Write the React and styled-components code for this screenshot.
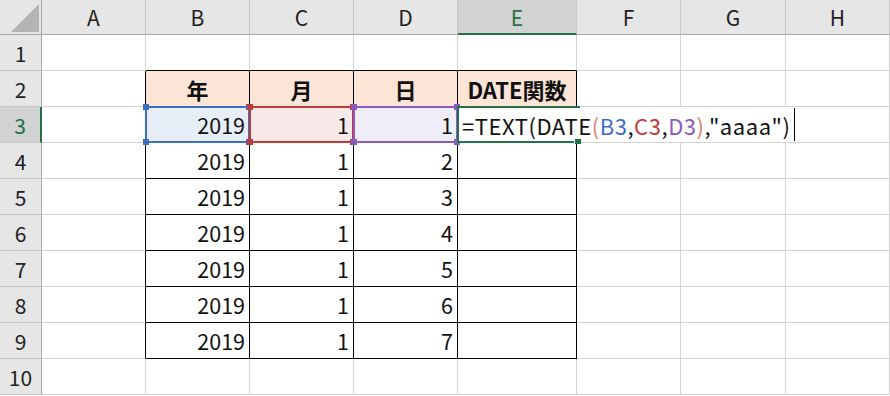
import React from "react";
import styled, { createGlobalStyle } from "styled-components";

const GlobalStyle = createGlobalStyle`
  html, body {
    margin: 0;
    padding: 0;
    background: #ffffff;
  }
  body {
    font-family: "Noto Sans CJK JP", "Noto Sans", sans-serif;
    overflow: hidden;
  }
`;

const COLS = ["A", "B", "C", "D", "E", "F", "G", "H"];
const COL_WIDTHS = [104, 104, 104, 104, 119, 104, 105, 104];
const ROWS = 10;

const GRID = "#d4d4d4";
const LINE = "#000000";

const Sheet = styled.div`
  display: grid;
  grid-template-columns: 42px ${COL_WIDTHS.map((w) => w + "px").join(" ")};
  grid-template-rows: 35px repeat(${ROWS}, 36px);
  width: 890px;
  height: 396px;
  background: #ffffff;
`;

const Corner = styled.div`
  display: flex;
  align-items: flex-end;
  justify-content: flex-end;
  padding: 0 2px 2px 0;
  background: #e6e6e6;
  border-right: 1px solid #a8a8a8;
  border-bottom: 1px solid #a8a8a8;
  box-sizing: border-box;
`;

const ColHeader = styled.div`
  display: flex;
  align-items: center;
  justify-content: center;
  box-sizing: border-box;
  background: ${(p) => (p.$selected ? "#d2d2d2" : "#e6e6e6")};
  color: ${(p) => (p.$selected ? "#217346" : "#222222")};
  border-right: 1px solid #c6c6c6;
  border-bottom: ${(p) => (p.$selected ? "2px solid #217346" : "1px solid #a8a8a8")};
  font-size: 21px;
  padding-top: ${(p) => (p.$selected ? "1px" : "0")};
`;

const RowHeader = styled.div`
  display: flex;
  align-items: center;
  justify-content: center;
  box-sizing: border-box;
  background: ${(p) => (p.$selected ? "#d2d2d2" : "#e6e6e6")};
  color: ${(p) => (p.$selected ? "#217346" : "#222222")};
  border-right: ${(p) => (p.$selected ? "2px solid #217346" : "1px solid #a8a8a8")};
  border-bottom: 1px solid #c6c6c6;
  font-size: 21px;
`;

const Cell = styled.div`
  position: relative;
  display: flex;
  align-items: center;
  justify-content: ${(p) => (p.$align === "right" ? "flex-end" : "center")};
  box-sizing: border-box;
  padding: 0 4px 0 4px;
  background: ${(p) => p.$fill || "transparent"};
  border-right: 1px solid ${(p) => p.$right || GRID};
  border-bottom: 1px solid ${(p) => p.$bottom || GRID};
  font-size: ${(p) => (p.$bold ? "22px" : "21.5px")};
  font-weight: ${(p) => (p.$bold ? 700 : 400)};
  color: #111111;
  white-space: nowrap;
`;

/* coloured frames that Excel draws over the cells a formula refers to */
const RefBox = styled.div`
  position: absolute;
  inset: -1px;
  border: 2px solid ${(p) => p.$color};
  z-index: ${(p) => p.$z};
  pointer-events: none;
`;

const Knob = styled.span`
  position: absolute;
  width: 6px;
  height: 6px;
  background: ${(p) => p.$color};
  left: ${(p) => (p.$x ? "auto" : "-4px")};
  right: ${(p) => (p.$x ? "-4px" : "auto")};
  top: ${(p) => (p.$y ? "auto" : "-4px")};
  bottom: ${(p) => (p.$y ? "-4px" : "auto")};
`;

/* in-cell editor, spills over the neighbouring cells */
const EditBox = styled.div`
  position: absolute;
  left: -1px;
  top: 0;
  bottom: 0;
  width: 341px;
  z-index: 5;
  display: flex;
  align-items: center;
  background: #ffffff;
  font-size: 22px;
  letter-spacing: 0.55px;
  color: #111111;
  padding-left: 5px;
  box-sizing: border-box;
`;

const ActiveFrame = styled.div`
  position: absolute;
  left: -1px;
  top: -1px;
  width: 121px;
  bottom: -1px;
  border-top: 2px solid #217346;
  border-bottom: 2px solid #217346;
  border-left: 2px solid #217346;
  z-index: 6;
  pointer-events: none;
`;

const FillHandle = styled.span`
  position: absolute;
  right: -1px;
  bottom: -3px;
  width: 6px;
  height: 5px;
  background: #217346;
  border-left: 1px solid #ffffff;
`;

const Caret = styled.span`
  display: inline-block;
  width: 1.5px;
  height: 33px;
  margin-left: 3px;
  background: #000000;
`;

const Tok = styled.span`
  color: ${(p) => p.$c || "inherit"};
`;

const headers = ["年", "月", "日", "DATE関数"];
const peach = "#fce4d6";

const refs = {
  B: { color: "#3a6fc4", fill: "#e8eef8", z: 2 },
  C: { color: "#c0393b", fill: "#f8e9e9", z: 3 },
  D: { color: "#8a5cc0", fill: "#efedf8", z: 4 },
};

function cellProps(col, row) {
  const ci = COLS.indexOf(col);
  const inTable = ci >= 1 && ci <= 4 && row >= 2 && row <= 9;
  const props = {};
  if (inTable || (col === "A" && row >= 2 && row <= 9)) props.$right = LINE;
  if (inTable || (row === 1 && ci >= 1 && ci <= 4)) props.$bottom = LINE;
  if (row === 2 && inTable) {
    props.$fill = peach;
    props.$bold = true;
  }
  if (row === 3 && refs[col]) props.$fill = refs[col].fill;
  if (row >= 3 && inTable) props.$align = "right";
  return props;
}

function cellValue(col, row) {
  if (row === 2) {
    const i = COLS.indexOf(col) - 1;
    if (i >= 0 && i < 4) return headers[i];
  }
  if (row >= 3 && row <= 9) {
    if (col === "B") return "2019";
    if (col === "C") return "1";
    if (col === "D") return String(row - 2);
  }
  return null;
}

function Formula() {
  return (
    <EditBox>
      <span>
        =TEXT(DATE<Tok $c="#dc8174">(</Tok>
        <Tok $c="#3a6fc4">B3</Tok>,<Tok $c="#c0393b">C3</Tok>,
        <Tok $c="#8a5cc0">D3</Tok>
        <Tok $c="#dc8174">)</Tok>,"aaaa")
      </span>
      <Caret />
    </EditBox>
  );
}

function RefOverlay({ col }) {
  const r = refs[col];
  return (
    <RefBox $color={r.color} $z={r.z}>
      <Knob $color={r.color} />
      <Knob $color={r.color} $x />
      <Knob $color={r.color} $y />
      <Knob $color={r.color} $x $y />
    </RefBox>
  );
}

export default function App() {
  const cells = [];
  for (let row = 1; row <= ROWS; row++) {
    cells.push(
      <RowHeader key={"r" + row} $selected={row === 3}>
        {row}
      </RowHeader>
    );
    COLS.forEach((col) => {
      const isRef = row === 3 && refs[col];
      const isActive = row === 3 && col === "E";
      cells.push(
        <Cell key={col + row} {...cellProps(col, row)}>
          {cellValue(col, row)}
          {isRef && <RefOverlay col={col} />}
          {isActive && (
            <>
              <Formula />
              <ActiveFrame>
                <FillHandle />
              </ActiveFrame>
            </>
          )}
        </Cell>
      );
    });
  }

  return (
    <>
      <GlobalStyle />
      <Sheet>
        <Corner>
          <svg width="28" height="28" viewBox="0 0 28 28">
            <polygon points="28,0 28,28 0,28" fill="#b4b4b4" />
          </svg>
        </Corner>
        {COLS.map((c) => (
          <ColHeader key={c} $selected={c === "E"}>
            {c}
          </ColHeader>
        ))}
        {cells}
      </Sheet>
    </>
  );
}
